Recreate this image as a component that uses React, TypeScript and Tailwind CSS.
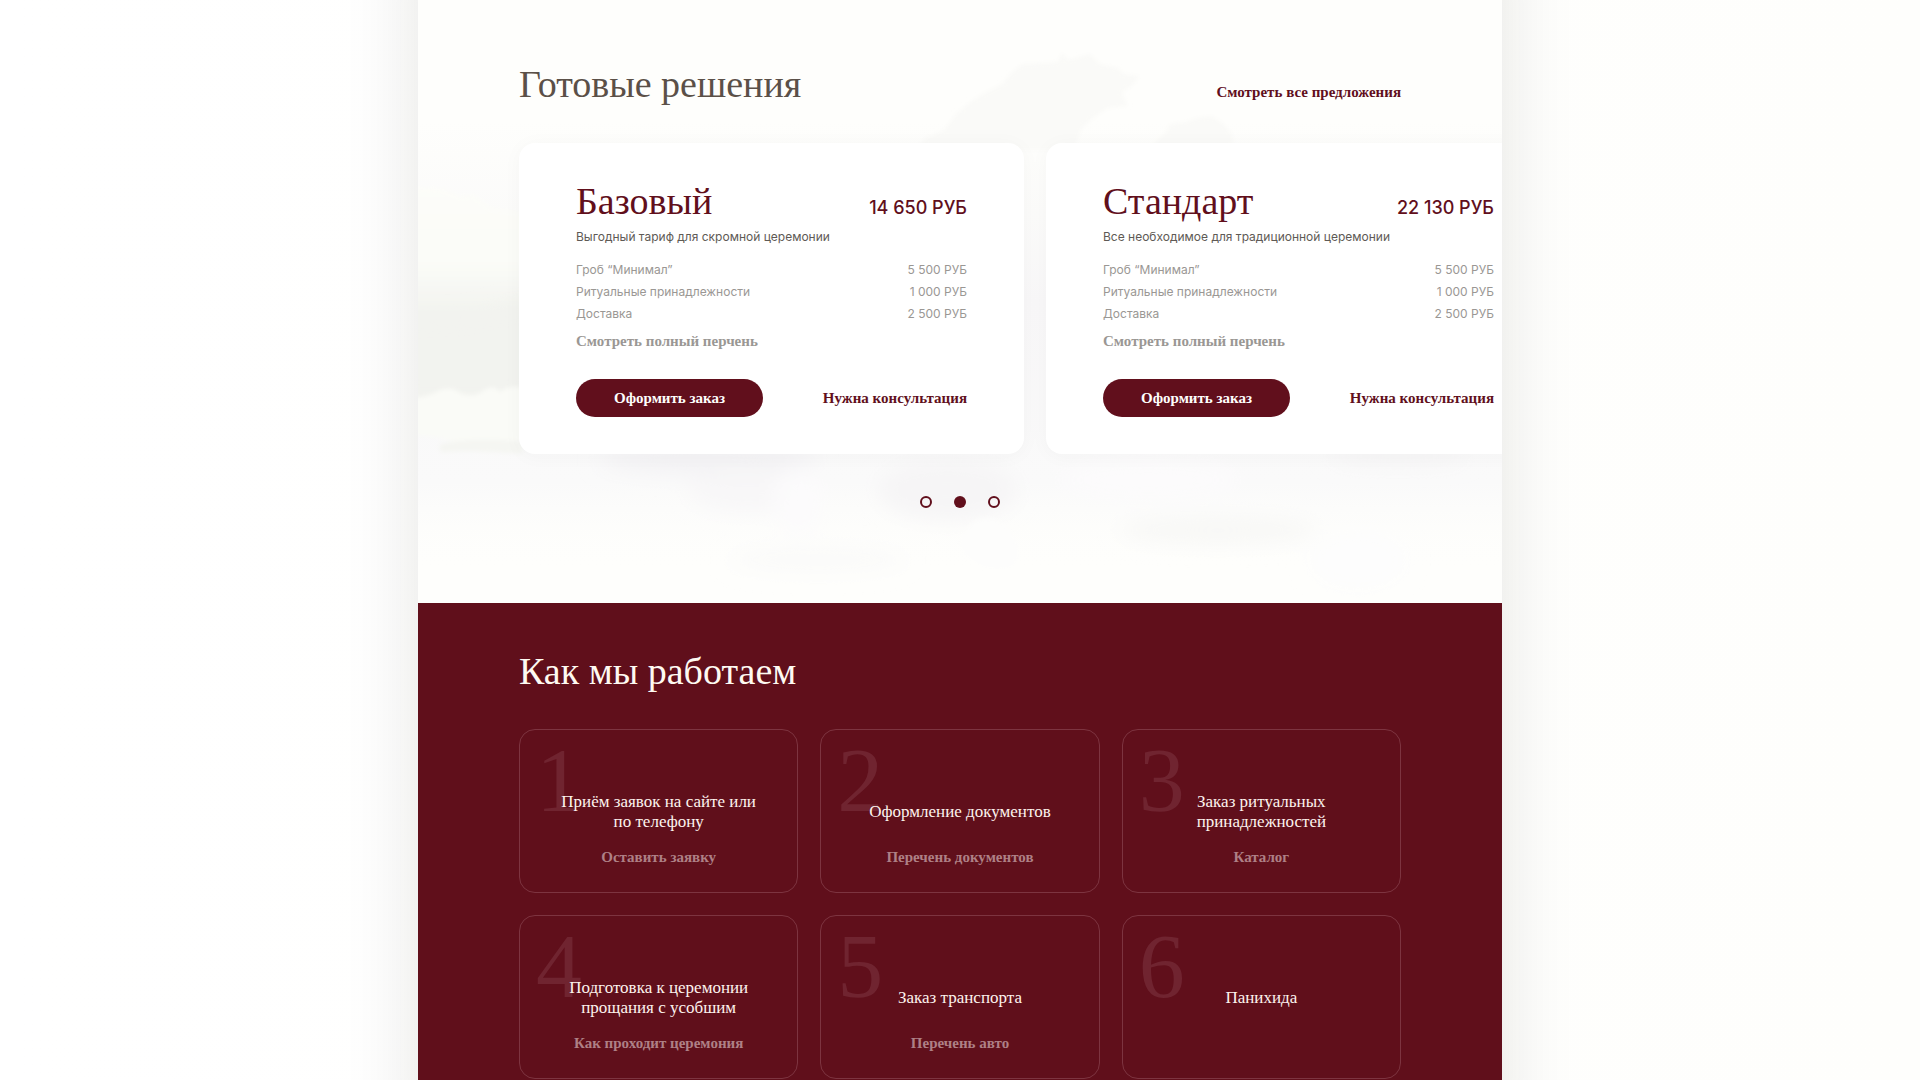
interface Tariff {
  name: string;
  price: string;
  description: string;
  items: { label: string; cost: string }[];
}

interface Step {
  title: string;
  link?: string;
}

const items = [
  { label: 'Гроб “Минимал”', cost: '5 500 РУБ' },
  { label: 'Ритуальные принадлежности', cost: '1 000 РУБ' },
  { label: 'Доставка', cost: '2 500 РУБ' },
];

const tariffs: Tariff[] = [
  {
    name: 'Базовый',
    price: '14 650 РУБ',
    description: 'Выгодный тариф для скромной церемонии',
    items,
  },
  {
    name: 'Стандарт',
    price: '22 130 РУБ',
    description: 'Все необходимое для традиционной церемонии',
    items,
  },
];

const steps: Step[] = [
  { title: 'Приём заявок на сайте или по телефону', link: 'Оставить заявку' },
  { title: 'Оформление документов', link: 'Перечень документов' },
  { title: 'Заказ ритуальных принадлежностей', link: 'Каталог' },
  { title: 'Подготовка к церемонии прощания с усобшим', link: 'Как проходит церемония' },
  { title: 'Заказ транспорта', link: 'Перечень авто' },
  { title: 'Панихида' },
];

const Clouds = () => (
  <svg
    className="absolute inset-0 h-full w-full"
    viewBox="0 0 1084 603"
    preserveAspectRatio="none"
    aria-hidden="true"
  >
    <defs>
      <filter id="soft" x="-20%" y="-30%" width="140%" height="160%">
        <feGaussianBlur stdDeviation="10" />
      </filter>
      <filter id="edge" x="-10%" y="-10%" width="120%" height="120%">
        <feGaussianBlur stdDeviation="2" />
      </filter>
      <linearGradient id="sky" x1="0" y1="0" x2="0" y2="1">
        <stop offset="0.2" stopColor="#f9f9f8" stopOpacity="0" />
        <stop offset="0.5" stopColor="#f8f7f8" />
        <stop offset="0.8" stopColor="#fafafa" />
        <stop offset="0.95" stopColor="#fefefc" stopOpacity="0" />
      </linearGradient>
      <linearGradient id="haze" x1="0" y1="0" x2="0" y2="1">
        <stop offset="0" stopColor="#fdfdf9" />
        <stop offset="0.35" stopColor="#fbfcf8" />
        <stop offset="0.6" stopColor="#f2f3ef" />
        <stop offset="1" stopColor="#f2f3ef" />
      </linearGradient>
    </defs>
    <rect width="1084" height="603" fill="url(#sky)" />
    <g filter="url(#edge)">
      <path
        d="M496 150 L508 138 L526 130 L538 114 L552 102 L568 92 L584 84 L594 72 L604 64 L640 62 L644 52 L650 60 L672 54 L682 64 L700 68 L706 74 L722 76 L714 86 L704 92 L710 106 L690 108 L678 116 L664 128 L656 150 Z"
        fill="#fafaf8"
      />
      <path
        d="M730 150 L748 132 L752 124 L768 122 L778 118 L794 116 L806 124 L814 134 L816 150 Z"
        fill="#fafaf8"
      />
      <path
        d="M-10 186 L24 188 L44 196 L56 194 L74 208 L104 212 V400 H-10 Z"
        fill="url(#haze)"
      />
    </g>
    <g filter="url(#soft)">
      <path d="M-20 320 L50 318 L110 300 V400 H-20 Z" fill="#f2f3ef" />
      <ellipse cx="540" cy="310" rx="24" ry="40" fill="#e9e7ea" />
      <ellipse cx="290" cy="460" rx="110" ry="14" fill="#f3f2f4" />
      <ellipse cx="330" cy="490" rx="60" ry="22" fill="#f8f7f8" />
      <ellipse cx="530" cy="490" rx="70" ry="30" fill="#f6f5f6" />
      <ellipse cx="800" cy="530" rx="100" ry="14" fill="#f8f8f6" />
      <ellipse cx="400" cy="560" rx="90" ry="12" fill="#fafaf9" />
      <ellipse cx="980" cy="456" rx="70" ry="8" fill="#f5f4f5" />
      <ellipse cx="380" cy="500" rx="24" ry="34" fill="#fcfbfc" />
      <ellipse cx="730" cy="480" rx="90" ry="20" fill="#fcfbfc" />
      <ellipse cx="940" cy="560" rx="50" ry="30" fill="#fdfdfd" />
    </g>
    <g filter="url(#edge)">
      <path
        d="M-10 398 Q8 398 18 392 Q32 384 44 394 Q58 398 66 390 Q76 384 82 392 Q92 384 104 388 V440 Q60 448 30 440 Q10 434 -10 436 Z"
        fill="#fafbf7"
      />
      <path d="M22 444 Q60 436 104 442 V454 Q60 450 22 452 Z" fill="#f5f6f2" />
      <path
        d="M542 546 Q546 522 566 518 Q586 518 592 534 Q606 552 594 566 Q560 574 542 546 Z"
        fill="#fdfdfc"
      />
    </g>
  </svg>
);

const TariffCard = ({ tariff }: { tariff: Tariff }) => (
  <article className="w-[505px] shrink-0 rounded-2xl bg-white px-[57px] pt-9 pb-[37px] shadow-[0_2px_20px_rgba(60,50,60,0.03)]">
    <div className="flex items-baseline justify-between text-[#610f1c]">
      <h3 className="font-['Liberation_Serif',serif] text-[38px] leading-[44px]">{tariff.name}</h3>
      <p className="text-lg font-medium">{tariff.price}</p>
    </div>
    <p className="mt-1 text-xs leading-5 text-[#5e5a55]">{tariff.description}</p>
    <table className="mt-3 w-full text-xs leading-[22px] text-[#9a9794]">
      <tbody>
        {tariff.items.map((item) => (
          <tr key={item.label}>
            <th scope="row" className="p-0 text-left font-normal">
              {item.label}
            </th>
            <td className="p-0 text-right">{item.cost}</td>
          </tr>
        ))}
      </tbody>
    </table>
    <a
      href="#"
      className="mt-1 block font-['Liberation_Serif',serif] text-[15px] leading-6 font-bold text-[#9a9794]"
    >
      Смотреть полный перчень
    </a>
    <div className="mt-[26px] flex items-center justify-between font-['Liberation_Serif',serif] text-[15px] font-bold">
      <button type="button" className="h-[38px] w-[187px] rounded-full bg-[#610f1c] text-[#fefefc]">
        Оформить заказ
      </button>
      <a href="#" className="text-[#610f1c]">
        Нужна консультация
      </a>
    </div>
  </article>
);

const StepCard = ({ step, index }: { step: Step; index: number }) => (
  <li className="relative flex h-[164px] flex-col items-center rounded-2xl border border-[#7d3440] px-9 pt-[62px] text-center">
    <span
      className="absolute top-1 left-4 text-[92px] leading-none text-[#702430]"
      aria-hidden="true"
    >
      {index + 1}
    </span>
    <div className="relative flex h-10 items-center">
      <h3 className="text-[17px] leading-5 text-[#fdf3ee]">{step.title}</h3>
    </div>
    {step.link && (
      <a href="#" className="relative mt-[15px] text-[15px] leading-5 font-bold text-[#ae8086]">
        {step.link}
      </a>
    )}
  </li>
);

const App = () => {
  return (
    <div className="flex min-h-screen justify-center overflow-hidden bg-linear-to-r from-white to-[#fefefc] font-['Inter',sans-serif]">
      {/* negative margin keeps the side shadow even at the page top and bottom */}
      <main className="-my-20 flex w-full max-w-[1084px] flex-col py-20 shadow-[0_0_72px_rgba(30,30,15,0.11)]">
        <section className="relative overflow-hidden bg-[#fefefc] px-[101px] pt-[60px] pb-[95px]">
          <Clouds />
          <div className="relative">
            <div className="flex items-baseline justify-between font-['Liberation_Serif',serif]">
              <h2 className="text-[38px] leading-[48px] text-[#5b5048]">Готовые решения</h2>
              <a href="#" className="text-[15px] font-bold text-[#610f1c]">
                Смотреть все предложения
              </a>
            </div>
            <div className="mt-[35px] flex gap-[22px]">
              {tariffs.map((tariff) => (
                <TariffCard key={tariff.name} tariff={tariff} />
              ))}
            </div>
            <div className="mt-[42px] flex justify-center gap-[22px]">
              {[0, 1, 2].map((dot) => (
                <button
                  key={dot}
                  type="button"
                  aria-label={`Слайд ${dot + 1}`}
                  className={
                    dot === 1
                      ? 'size-3 rounded-full bg-[#610f1c]'
                      : 'size-3 rounded-full border-2 border-[#610f1c]'
                  }
                />
              ))}
            </div>
          </div>
        </section>
        <section className="flex-1 bg-[#600f1b] px-[101px] pt-11 font-['Liberation_Serif',serif]">
          <h2 className="text-[38px] leading-[48px] text-[#fefaf2]">Как мы работаем</h2>
          <ol className="mt-[34px] grid grid-cols-3 gap-[22px]">
            {steps.map((step, index) => (
              <StepCard key={step.title} step={step} index={index} />
            ))}
          </ol>
        </section>
      </main>
    </div>
  );
};

export default App;
